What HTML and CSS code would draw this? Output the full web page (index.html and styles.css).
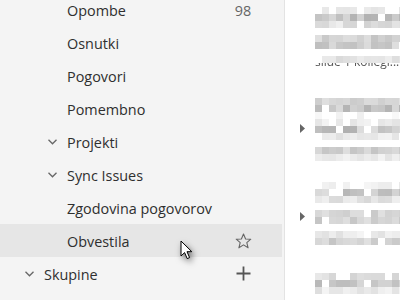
FILE: index.html
```html
<!DOCTYPE html>
<html>
<head>
    <title>Mapa</title>
    <meta name="viewport" content="width=device-width, initial-scale=1">
    <link rel="stylesheet" href="styles.css">
</head>
<body>
    <div class="app">
        <nav class="folders">
            <ul class="folder-list">
                <li class="folder">
                    <span class="chevron"></span>
                    <span class="folder-name">Opombe</span>
                    <span class="folder-extra count">98</span>
                </li>
                <li class="folder">
                    <span class="chevron"></span>
                    <span class="folder-name">Osnutki</span>
                </li>
                <li class="folder">
                    <span class="chevron"></span>
                    <span class="folder-name">Pogovori</span>
                </li>
                <li class="folder">
                    <span class="chevron"></span>
                    <span class="folder-name">Pomembno</span>
                </li>
                <li class="folder">
                    <span class="chevron">
                        <svg width="9" height="6" viewBox="0 0 9 6"><polyline points="0.5,0.8 4.5,4.8 8.5,0.8" fill="none" stroke="#666" stroke-width="1.3"/></svg>
                    </span>
                    <span class="folder-name">Projekti</span>
                </li>
                <li class="folder">
                    <span class="chevron">
                        <svg width="9" height="6" viewBox="0 0 9 6"><polyline points="0.5,0.8 4.5,4.8 8.5,0.8" fill="none" stroke="#666" stroke-width="1.3"/></svg>
                    </span>
                    <span class="folder-name">Sync Issues</span>
                </li>
                <li class="folder">
                    <span class="chevron"></span>
                    <span class="folder-name">Zgodovina pogovorov</span>
                </li>
                <li class="folder hovered">
                    <span class="chevron"></span>
                    <span class="folder-name">Obvestila</span>
                    <span class="folder-extra">
                        <svg width="17" height="16" viewBox="0 0 17 16"><polygon points="8.5,1 10.6,6 15.8,6.2 11.8,9.6 13.1,14.8 8.5,11.9 3.9,14.8 5.2,9.6 1.2,6.2 6.4,6" fill="none" stroke="#666" stroke-width="1.1" stroke-linejoin="round"/></svg>
                    </span>
                </li>
                <li class="folder group">
                    <span class="chevron">
                        <svg width="9" height="6" viewBox="0 0 9 6"><polyline points="0.5,0.8 4.5,4.8 8.5,0.8" fill="none" stroke="#666" stroke-width="1.3"/></svg>
                    </span>
                    <span class="folder-name">Skupine</span>
                    <span class="folder-extra">
                        <svg width="15" height="15" viewBox="0 0 15 15"><path d="M7.5 0.5v14M0.5 7.5h14" stroke="#555" stroke-width="1.8"/></svg>
                    </span>
                </li>
            </ul>
        </nav>
        <main class="messages">
            <canvas id="blurred" width="115" height="300"></canvas>
        </main>
    </div>

    <!-- mouse pointer over the hovered row -->
    <svg class="pointer" width="14" height="21" viewBox="0 0 14 21">
        <path d="M1 1 L1 16 L4.6 12.6 L7.2 18.6 L9.6 17.6 L7 11.7 L11.8 11.7 Z" fill="#fff" stroke="#000" stroke-width="1" stroke-linejoin="round"/>
    </svg>

    <script src="blur.js"></script>
</body>
</html>
```

FILE: styles.css
```css
body {
    margin: 0;
    width: 400px;
    height: 300px;
    overflow: hidden;
    background: #fff;
    font-family: 'Open Sans', 'Noto Sans', Arial, sans-serif;
}

.app {
    display: flex;
    height: 300px;
}

.folders {
    flex: 0 0 285px;
    box-sizing: border-box;
    background: #f4f4f4;
    border-right: 1px solid #e3e3e3;
    padding-right: 2px;
    overflow: hidden;
}

.folder-list {
    list-style: none;
    margin: -7px 0 0;
    padding: 0;
}

.folder {
    display: flex;
    align-items: center;
    height: 33px;
    padding: 0 30px 0 48px;
    font-size: 14.4px;
    color: #2f2f2f;
    white-space: nowrap;
}

.folder.group {
    padding-left: 25px;
}

.folder.hovered {
    background: #e6e6e6;
}

.chevron {
    flex: 0 0 19px;
    display: flex;
    align-items: center;
    padding-top: 1px;
}

.folder-name {
    flex: 1 1 auto;
    padding-top: 2px;
}

.folder-extra {
    flex: 0 0 18px;
    display: flex;
    justify-content: center;
    align-items: center;
}

.count {
    color: #666;
    padding-top: 2px;
}

.messages {
    flex: 1;
    background: #fff;
}

#blurred {
    display: block;
}

.pointer {
    position: absolute;
    left: 180px;
    top: 240px;
    filter: drop-shadow(2px 3px 3px rgba(0,0,0,0.55));
}
```

FILE: blur.js
```javascript
// pixelated (blurred) message previews on a 7px grid
var canvas = document.getElementById('blurred');
var ctx = canvas.getContext('2d');

var seed = 11;
function rnd() {
    seed = (seed * 16807) % 2147483647;
    return seed / 2147483647;
}

// [grid row, lightest, darkest, chance of a blank block]
var rows = [
    [1, 236, 222, 0.25], [2, 214, 176, 0.08], [3, 240, 210, 0.1],
    [5, 224, 196, 0.05], [6, 222, 190, 0.05],
    [8, 240, 218, 0.05],
    [14, 226, 200, 0.15], [15, 218, 180, 0.05], [16, 248, 234, 0.8],
    [17, 246, 226, 0.35], [18, 220, 176, 0.05], [19, 244, 222, 0.05],
    [21, 226, 196, 0.1], [22, 244, 226, 0.05],
    [26, 246, 232, 0.4], [27, 222, 180, 0.08], [28, 240, 216, 0.05],
    [30, 228, 200, 0.05], [31, 226, 196, 0.05],
    [33, 244, 224, 0.15], [34, 230, 196, 0.1],
    [39, 240, 210, 0.3], [40, 226, 180, 0.1], [41, 244, 222, 0.1]
];

rows.forEach(function (r) {
    for (var c = 0; c < 13; c++) {
        if (rnd() < r[3]) continue;
        var g = Math.round(r[1] - (r[1] - r[2]) * rnd());
        ctx.fillStyle = 'rgb(' + g + ',' + g + ',' + g + ')';
        ctx.fillRect(30 + c * 7, r[0] * 7, 7, 7);
    }
});

// lower edge of real text peeking out below the first preview
ctx.save();
ctx.beginPath();
ctx.rect(30, 63, 85, 6);
ctx.clip();
ctx.fillStyle = '#555';
ctx.font = '12px "Open Sans", sans-serif';
ctx.fillText('slide 1 kollegi...', 30, 66);
ctx.restore();

// expand arrows
ctx.fillStyle = '#666';
[128.5, 216.5].forEach(function (y) {
    ctx.beginPath();
    ctx.moveTo(15, y - 4.5);
    ctx.lineTo(20, y);
    ctx.lineTo(15, y + 4.5);
    ctx.closePath();
    ctx.fill();
});
```
